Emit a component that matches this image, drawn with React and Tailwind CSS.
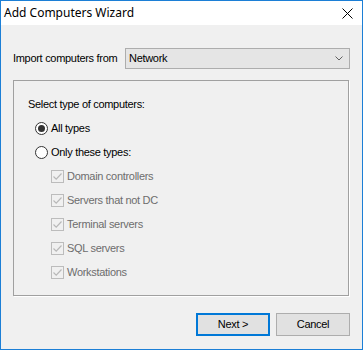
import React from 'react';

const Radio = ({ checked, label }) => (
  <div className="flex items-center h-[24px] pl-[7px]">
    <span className="w-[13px] h-[13px] rounded-full border border-[#333333] bg-white flex items-center justify-center">
      {checked && <span className="w-[7px] h-[7px] rounded-full bg-[#333333]" />}
    </span>
    <span className="ml-[3px] text-black">{label}</span>
  </div>
);

const CheckItem = ({ label }) => (
  <div className="flex items-center h-[24px] pl-[23px]">
    <span className="w-[13px] h-[13px] border border-[#bcbcbc] bg-[#f0f0f0] flex items-center justify-center">
      <svg width="11" height="11" viewBox="0 0 11 11">
        <path d="M1.5 5.5 L4.2 8.2 L9.5 2.5" fill="none" stroke="#b8b8b8" strokeWidth="1.2" />
      </svg>
    </span>
    <span className="ml-[3px] text-[#6d6d6d]">{label}</span>
  </div>
);

const types = ['Domain controllers', 'Servers that not DC', 'Terminal servers', 'SQL servers', 'Workstations'];

export default function App() {
  return (
    <div className="w-[363px] h-[350px] border border-[#1c7fd6] bg-[#f0f0f0] flex flex-col text-[11px] tracking-[-0.3px] font-['Liberation_Sans',Arial,sans-serif]">
      {/* title bar */}
      <div className="h-[24px] bg-white flex items-center justify-between pl-[3px] pr-[9px] shrink-0">
        <span className="text-[12px] tracking-normal text-black font-['Noto_Sans',sans-serif]">Add Computers Wizard</span>
        <svg width="11" height="11" viewBox="0 0 11 11">
          <path d="M0.5 0.5 L10.5 10.5 M10.5 0.5 L0.5 10.5" stroke="#000" strokeWidth="1" />
        </svg>
      </div>

      <div className="flex flex-col px-[12px] pt-[23px]">
        <div className="flex items-center h-[21px]">
          <span className="w-[112px] text-black">Import computers from</span>
          <div className="w-[225px] h-[21px] border border-[#adadad] bg-[#e5e5e5] flex items-center justify-between pl-[3px] pr-[6px]">
            <span className="text-black">Network</span>
            <svg width="8" height="5" viewBox="0 0 8 5">
              <path d="M0.5 0.5 L4 4 L7.5 0.5" fill="none" stroke="#606060" strokeWidth="1" />
            </svg>
          </div>
        </div>

        <div className="mt-[11px] w-[336px] h-[216px] border border-[#a0a0a0] shadow-[1px_1px_0_#ffffff] pt-[11px] pl-[14px]">
          <div className="flex items-center h-[24px] text-black">Select type of computers:</div>
          <Radio checked label="All types" />
          <Radio label="Only these types:" />
          {types.map(t => (
            <CheckItem key={t} label={t} />
          ))}
        </div>

        <div className="flex justify-end gap-[6px] mt-[17px]">
          <button className="w-[74px] h-[23px] border-2 border-[#0078d7] bg-[#e1e1e1] text-black">Next &gt;</button>
          <button className="w-[74px] h-[23px] border border-[#adadad] bg-[#e1e1e1] text-black">Cancel</button>
        </div>
      </div>
    </div>
  );
}
